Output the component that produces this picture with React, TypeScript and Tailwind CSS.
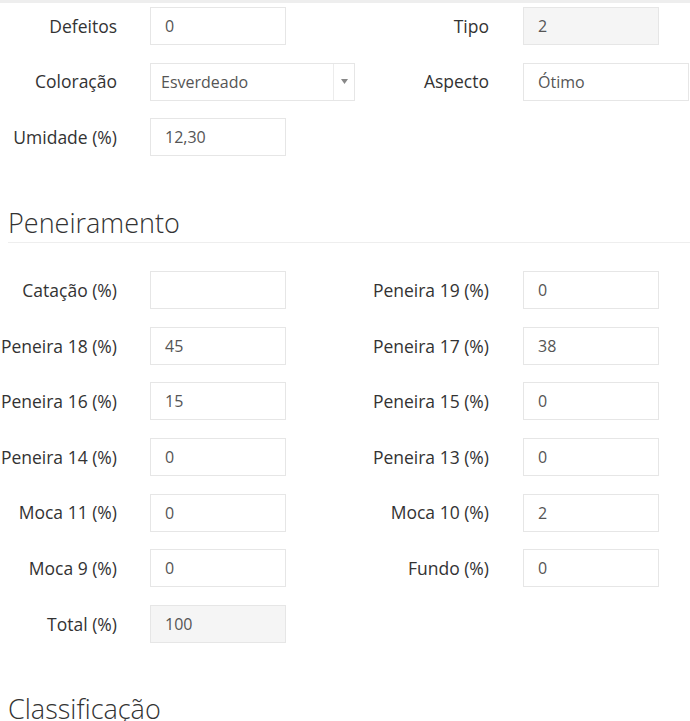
import React from "react";

type Field = { label: string; value?: string; disabled?: boolean; kind?: "select" | "wide" };

function Input({ f }: { f: Field }) {
  if (f.kind === "select") {
    return (
      <div className="flex h-[38px] w-[205px] shrink-0 border border-[#e6e6e6] bg-white">
        <div className="flex flex-1 items-center pl-[10px] text-[#555]">{f.value}</div>
        <div className="flex w-[21px] items-center justify-center border-l border-[#ececec]">
          <svg width="7" height="5" viewBox="0 0 7 5">
            <path d="M0 0 L7 0 L3.5 5 Z" fill="#888" />
          </svg>
        </div>
      </div>
    );
  }
  return (
    <div
      className={
        "flex h-[38px] shrink-0 items-center border border-[#e6e6e6] pl-[14px] text-[#555] " +
        (f.kind === "wide" ? "w-[166px] " : "w-[136px] ") +
        (f.disabled ? "bg-[#f5f5f5]" : "bg-white")
      }
    >
      {f.value}
    </div>
  );
}

function Row({ left, right }: { left: Field; right?: Field }) {
  return (
    <div className="flex h-[38px]">
      <div className="flex w-[345px] shrink-0 items-center">
        <div className="w-[117px] shrink-0 whitespace-nowrap text-right text-[17.5px] text-[#333]">{left.label}</div>
        <div className="ml-[33px] shrink-0">
          <Input f={left} />
        </div>
      </div>
      {right && (
        <div className="flex items-center">
          <div className="w-[144px] shrink-0 whitespace-nowrap text-right text-[17.5px] text-[#333]">{right.label}</div>
          <div className="ml-[34px] shrink-0">
            <Input f={right} />
          </div>
        </div>
      )}
    </div>
  );
}

function Heading({ children }: { children: React.ReactNode }) {
  return (
    <div className="ml-[8px] border-b border-[#eeeeee] pb-[4px] text-[27px] font-light leading-[30px] text-[#333]">
      {children}
    </div>
  );
}

export default function App() {
  return (
    <div className="h-[721px] w-[690px] overflow-hidden bg-white font-['Open_Sans',sans-serif] text-[16px]">
      <div className="h-[3px] bg-[#eeeeee]" />
      <div className="flex flex-col gap-[17.6px] pt-[4px]">
        <Row left={{ label: "Defeitos", value: "0" }} right={{ label: "Tipo", value: "2", disabled: true }} />
        <Row
          left={{ label: "Coloração", value: "Esverdeado", kind: "select" }}
          right={{ label: "Aspecto", value: "Ótimo", kind: "wide" }}
        />
        <Row left={{ label: "Umidade (%)", value: "12,30" }} />
      </div>
      <div className="mt-[52px]">
        <Heading>Peneiramento</Heading>
      </div>
      <div className="flex flex-col gap-[17.6px] pt-[28px]">
        <Row left={{ label: "Catação (%)", value: "" }} right={{ label: "Peneira 19 (%)", value: "0" }} />
        <Row left={{ label: "Peneira 18 (%)", value: "45" }} right={{ label: "Peneira 17 (%)", value: "38" }} />
        <Row left={{ label: "Peneira 16 (%)", value: "15" }} right={{ label: "Peneira 15 (%)", value: "0" }} />
        <Row left={{ label: "Peneira 14 (%)", value: "0" }} right={{ label: "Peneira 13 (%)", value: "0" }} />
        <Row left={{ label: "Moca 11 (%)", value: "0" }} right={{ label: "Moca 10 (%)", value: "2" }} />
        <Row left={{ label: "Moca 9 (%)", value: "0" }} right={{ label: "Fundo (%)", value: "0" }} />
        <Row left={{ label: "Total (%)", value: "100", disabled: true }} />
      </div>
      <div className="mt-[51px]">
        <Heading>Classificação</Heading>
      </div>
    </div>
  );
}
